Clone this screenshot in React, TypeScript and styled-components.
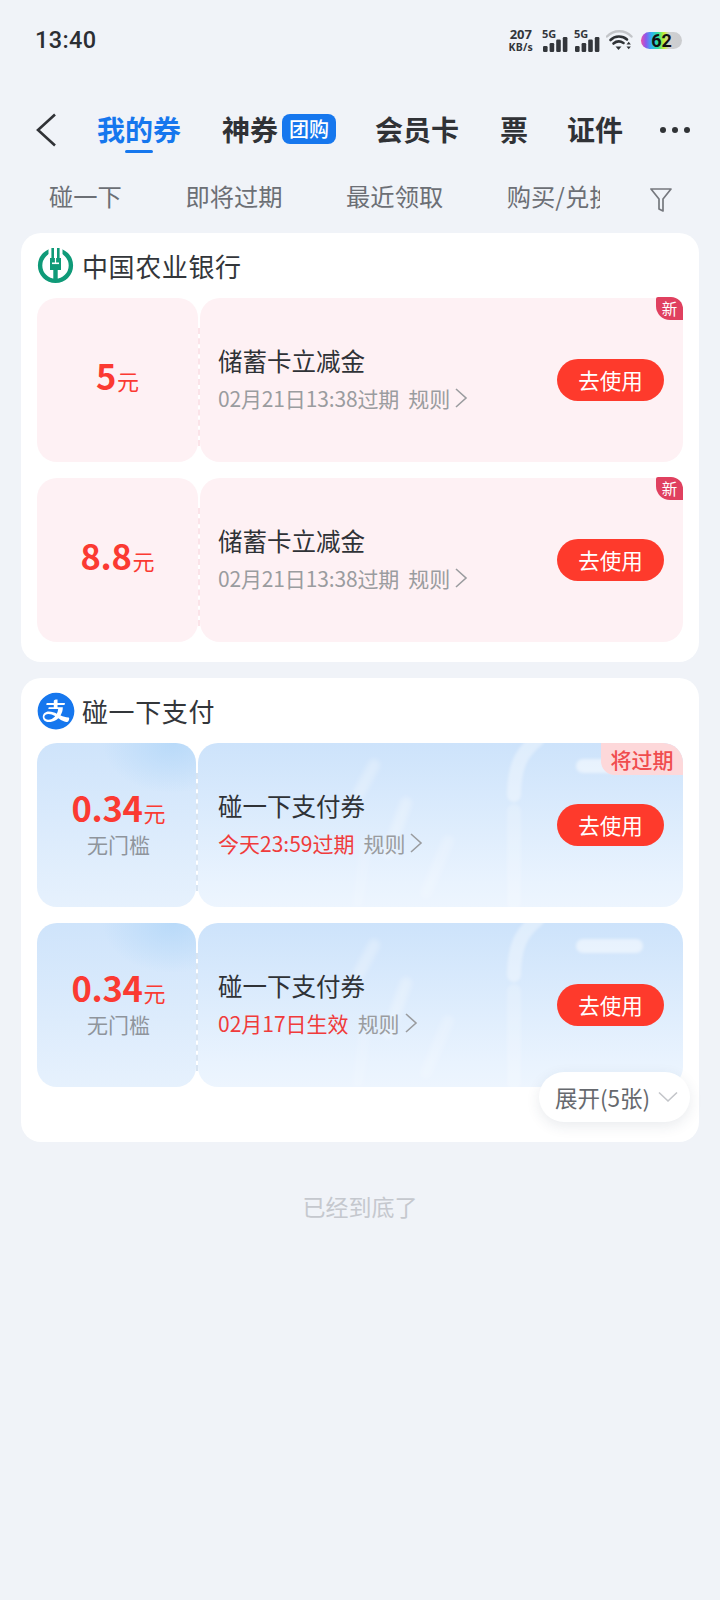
import React from "react";
import styled, { createGlobalStyle } from "styled-components";
import { AiFillAlipayCircle } from "react-icons/ai";

const cjk = `"Noto Sans CJK SC", "Noto Sans", sans-serif`;
const latin = `Roboto, "Noto Sans CJK SC", sans-serif`;

const Global = createGlobalStyle`
  html, body { margin: 0; padding: 0; background: #f0f3f8; }
  * { box-sizing: border-box; }
  body { font-family: ${cjk}; }
`;

const Page = styled.div`
  width: 720px;
  min-height: 1600px;
  background: #f0f3f8;
`;

/* ---------- status bar ---------- */
const StatusBar = styled.div`
  height: 80px;
  padding: 0 38px 0 35px;
  display: flex;
  align-items: center;
  justify-content: space-between;
`;
const Clock = styled.div`
  margin-top: 2px;
  font: 500 23.5px/1 ${latin};
  color: #2b2e33;
  letter-spacing: 0.4px;
`;
const StatusIcons = styled.div`
  display: flex;
  align-items: center;
`;
const Speed = styled.div`
  display: flex;
  flex-direction: column;
  align-items: center;
  font-family: "Noto Sans", sans-serif;
  font-weight: 700;
  color: #33363b;
  margin-right: 9px;
  span:first-child { font-size: 13px; line-height: 13px; }
  span:last-child { font-size: 10.5px; line-height: 12px; letter-spacing: 0.2px; }
`;
const SignalWrap = styled.div`
  position: relative;
  width: 27px;
  height: 24px;
  margin-right: 5px;
`;
const SignalLabel = styled.span`
  position: absolute;
  left: 0;
  top: 0;
  font: 700 11px/11px "Noto Sans", sans-serif;
  color: #33363b;
`;
const Battery = styled.div`
  width: 41px;
  height: 17px;
  border-radius: 9px;
  margin-left: 8px;
  background: linear-gradient(90deg, #ec4fa8 0%, #8a58ee 12%, #2fb6f2 26%, #2fe39a 42%, #c8ef2c 56%, #cfd0d2 68%, #cbcccf 100%);
  font: 700 18px/17px ${latin};
  color: #111;
  text-align: center;
`;

/* ---------- main tabs ---------- */
const Nav = styled.div`
  height: 100px;
  padding: 0 0 2px 36px;
  display: flex;
  align-items: center;
`;
const BackButton = styled.div`
  width: 20px;
  height: 34px;
  margin: 2px 41px 0 0;
  display: flex;
`;
const NavItem = styled.div<{ $active?: boolean; $gap?: number }>`
  position: relative;
  font: 700 28px/40px ${cjk};
  color: ${(p) => (p.$active ? "#1677ee" : "#303236")};
  margin-right: ${(p) => p.$gap ?? 41}px;
  display: flex;
  align-items: center;
  white-space: nowrap;
`;
const ActiveBar = styled.i`
  position: absolute;
  left: 28px;
  bottom: -4px;
  width: 28px;
  height: 3px;
  border-radius: 2px;
  background: #1677ee;
`;
const GroupBadge = styled.span`
  width: 54px;
  height: 30px;
  margin-left: 4px;
  border-radius: 8px;
  background: #1677ee;
  color: #fff;
  font: 500 20px/30px ${cjk};
  text-align: center;
`;
const Dots = styled.div`
  margin-top: 2px;
  display: flex;
  gap: 6px;
  i { width: 6px; height: 6px; border-radius: 50%; background: #303236; }
`;

/* ---------- filter row ---------- */
const FilterRow = styled.div`
  height: 35px;
  margin-bottom: 18px;
  padding-left: 49px;
  display: flex;
  align-items: center;
`;
const FilterScroll = styled.div`
  width: 551px;
  margin-top: -4px;
  overflow: hidden;
  display: flex;
  gap: 63.5px;
  flex-shrink: 0;
`;
const FilterItem = styled.span`
  font: 400 24.3px/35px ${cjk};
  color: #6c6f75;
  white-space: nowrap;
  flex-shrink: 0;
`;
const FilterIcon = styled.div`
  margin: 5px 0 0 50px;
  width: 22px;
  height: 26px;
`;

/* ---------- cards ---------- */
const Cards = styled.div`
  margin: 0 21px;
  display: flex;
  flex-direction: column;
  gap: 16px;
`;
const Card = styled.section<{ $bottom: number }>`
  position: relative;
  background: #fff;
  border-radius: 20px;
  padding: 0 16px ${(p) => p.$bottom}px 16px;
`;
const CardHead = styled.div`
  height: 65px;
  display: flex;
  align-items: center;
  gap: 8px;
`;
const CardTitle = styled.h2`
  margin: 0;
  font: 400 26px/36px ${cjk};
  letter-spacing: 0.6px;
  color: #33363a;
`;
const LogoBox = styled.div`
  width: 37px;
  height: 37px;
  display: flex;
  align-items: center;
  justify-content: center;
  svg { flex-shrink: 0; }
`;
const Tickets = styled.div`
  display: flex;
  flex-direction: column;
  gap: 16px;
`;
const Ticket = styled.div<{ $blue?: boolean }>`
  height: 164px;
  display: grid;
  grid-template-columns: ${(p) => (p.$blue ? "159px" : "161px")} 1fr;
  gap: 2px;
`;
const Stub = styled.div<{ $blue?: boolean }>`
  position: relative;
  border-radius: 20px;
  padding-left: ${(p) => (p.$blue ? "4px" : "0")};
  display: flex;
  flex-direction: column;
  align-items: center;
  justify-content: center;
  background: ${(p) =>
    p.$blue
      ? "radial-gradient(70px 50px at 85% 0%, #b9daf9 0%, rgba(185,218,249,0) 100%), linear-gradient(180deg, #cfe4fb 0%, #e6f1fd 100%)"
      : "#fef1f4"};
  &::after {
    content: "";
    position: absolute;
    right: -2px;
    top: 30px;
    bottom: 16px;
    border-right: 2px dashed ${(p) => (p.$blue ? "#d8e4f1" : "#fbe3e8")};
  }
`;
const Amount = styled.div<{ $withNote?: boolean }>`
  font: 700 34.5px/38px ${cjk};
  letter-spacing: -0.3px;
  color: #fb3a32;
  margin-top: ${(p) => (p.$withNote ? "-4px" : "-10px")};
  small { font: 400 22px/1 ${cjk}; letter-spacing: 0; margin-left: 1px; }
`;
const Threshold = styled.div`
  margin-top: 4px;
  font: 400 21px/28px ${cjk};
  color: #8f959c;
`;
const Body = styled.div<{ $blue?: boolean }>`
  position: relative;
  border-radius: 20px;
  padding: 0 19px 0 ${(p) => (p.$blue ? "20px" : "18px")};
  display: flex;
  align-items: center;
  justify-content: space-between;
  background: ${(p) =>
    p.$blue ? "linear-gradient(180deg, #cde3fb 0%, #e9f3fe 85%, #edf5fe 100%)" : "#fef1f4"};
`;
const Deco = styled.svg`
  position: absolute;
  left: 0;
  top: 0;
  width: 100%;
  height: 100%;
  border-radius: 20px;
  overflow: hidden;
`;
const Info = styled.div`
  position: relative;
  display: flex;
  flex-direction: column;
  gap: 2px;
  margin-top: -2px;
`;
const TicketTitle = styled.div`
  font: 400 24.5px/36px ${cjk};
  color: #2f3236;
`;
const Meta = styled.div`
  display: flex;
  align-items: center;
  font: 400 21px/34px ${cjk};
  color: #9a9c9f;
  white-space: nowrap;
`;
const Expiry = styled.span<{ $red?: boolean }>`
  color: ${(p) => (p.$red ? "#f03b3b" : "#9a9c9f")};
  letter-spacing: ${(p) => (p.$red ? "0" : "-0.15px")};
  margin-right: 9px;
`;
const Use = styled.div`
  position: relative;
  width: 107px;
  height: 42px;
  border-radius: 21px;
  background: #fe3a2c;
  color: #fff;
  font: 400 21.5px/42px ${cjk};
  text-align: center;
  flex-shrink: 0;
`;
const NewBadge = styled.span`
  position: absolute;
  right: 0;
  top: -1px;
  width: 27px;
  height: 23px;
  background: #e0405f;
  color: #fff;
  font: 400 15.5px/22px ${cjk};
  text-align: center;
  border-radius: 2px 12px 0 14px;
`;
const ExpireBadge = styled.span`
  position: absolute;
  right: 0;
  top: 0;
  width: 82px;
  height: 32px;
  background: #fdd8da;
  color: #f04c4e;
  font: 500 21px/32px ${cjk};
  text-align: center;
  border-radius: 0 20px 0 14px;
`;
const Expand = styled.div`
  position: absolute;
  left: 518px;
  top: 394px;
  width: 151px;
  height: 50px;
  padding: 0 12px 0 16px;
  border-radius: 25px;
  background: #fff;
  box-shadow: 0 4px 14px rgba(40, 60, 90, 0.1);
  display: flex;
  align-items: center;
  justify-content: space-between;
  font: 400 22.5px/48px ${cjk};
  color: #66696e;
  white-space: nowrap;
`;
const EndNote = styled.div`
  margin-top: 47px;
  text-align: center;
  font: 400 23px/34px ${cjk};
  color: #c5c8ce;
`;

/* ---------- drawings ---------- */
const Wifi = () => (
  <svg width="27" height="24" viewBox="0 0 27 24" fill="none">
    <path d="M1 8.5C7.5 1.5 19 1.5 25.5 8.5" stroke="#c3c5c9" strokeWidth="2.4" strokeLinecap="round" />
    <path d="M4.5 12C9 7.5 16.5 7.5 21 11.5" stroke="#2f3236" strokeWidth="2.6" strokeLinecap="round" />
    <path d="M7.5 15.5C10.5 13 14.5 13 17.5 15" stroke="#2f3236" strokeWidth="2.6" strokeLinecap="round" />
    <path d="M9.5 18.5h6l-3 3.5z" fill="#2f3236" />
    <path d="M20.5 16.5l2.2-2.8 2.2 2.8zM20.5 18.5l2.2 2.8 2.2-2.8z" fill="#2f3236" />
  </svg>
);

const Bars = () => (
  <svg width="25" height="15" viewBox="0 0 25 15" style={{ position: "absolute", left: 1, bottom: 0 }}>
    <rect x="0" y="9" width="4.6" height="6" rx="1.2" fill="#33363b" />
    <rect x="6.6" y="6" width="4.6" height="9" rx="1.2" fill="#33363b" />
    <rect x="13.2" y="2.5" width="4.6" height="12.5" rx="1.2" fill="#33363b" />
    <rect x="19.8" y="0" width="4.6" height="15" rx="1.2" fill="#33363b" />
  </svg>
);

const Signal = () => (
  <SignalWrap>
    <SignalLabel>5G</SignalLabel>
    <Bars />
  </SignalWrap>
);

const Chevron = () => (
  <svg width="14" height="22" viewBox="0 0 14 22" fill="none" style={{ marginLeft: 4 }}>
    <path d="M2 2l10 9-10 9" stroke="#9a9c9f" strokeWidth="1.6" />
  </svg>
);

const AbcLogo = () => (
  <svg width="37" height="37" viewBox="0 0 37 37">
    <circle cx="18.5" cy="18.5" r="15.4" fill="#fff" stroke="#0f9a78" strokeWidth="4.4" />
    <rect x="11.5" y="0" width="14" height="10" fill="#fff" />
    <rect x="14.4" y="1" width="2.6" height="11" fill="#0f9a78" />
    <rect x="20" y="1" width="2.6" height="11" fill="#0f9a78" />
    <rect x="13" y="11" width="11" height="12" fill="#0f9a78" />
    <rect x="17.9" y="11" width="1.2" height="5" fill="#fff" />
    <rect x="15" y="15.5" width="7" height="1.6" fill="#fff" />
    <rect x="16.3" y="22" width="4.4" height="12" fill="#0f9a78" />
  </svg>
);

const Streaks = () => (
  <Deco viewBox="0 0 485 164" preserveAspectRatio="none" fill="none" stroke="#fff" strokeLinecap="round">
    <g strokeOpacity="0.25" strokeWidth="12" style={{ filter: "blur(2.5px)" }}>
      <path d="M176 22L160 52" />
      <path d="M208 60L190 110" />
      <path d="M250 98L228 150" strokeOpacity="0.18" />
      <path d="M168 100L160 160" strokeOpacity="0.12" />
    </g>
    <g strokeOpacity="0.36" strokeWidth="14" style={{ filter: "blur(1.5px)" }}>
      <path d="M316 52C316 26 322 10 340 -4" />
      <path d="M316 68V160" strokeOpacity="0.2" />
      <path d="M385 23H438" strokeOpacity="0.5" />
    </g>
  </Deco>
);

type TicketData = {
  blue?: boolean;
  amount: string;
  threshold?: string;
  title: string;
  expiry: string;
  red?: boolean;
  badge?: "new" | "expire";
};

const CouponTicket = ({ blue, amount, threshold, title, expiry, red, badge }: TicketData) => (
  <Ticket $blue={blue}>
    <Stub $blue={blue}>
      <Amount $withNote={!!threshold}>
        {amount}
        <small>元</small>
      </Amount>
      {threshold && <Threshold>{threshold}</Threshold>}
    </Stub>
    <Body $blue={blue}>
      {blue && <Streaks />}
      <Info>
        <TicketTitle>{title}</TicketTitle>
        <Meta>
          <Expiry $red={red}>{expiry}</Expiry>
          规则
          <Chevron />
        </Meta>
      </Info>
      <Use>去使用</Use>
      {badge === "expire" && <ExpireBadge>将过期</ExpireBadge>}
      {badge === "new" && <NewBadge>新</NewBadge>}
    </Body>
  </Ticket>
);

export default function App() {
  return (
    <Page>
      <Global />
      <StatusBar>
        <Clock>13:40</Clock>
        <StatusIcons>
          <Speed>
            <span>207</span>
            <span>KB/s</span>
          </Speed>
          <Signal />
          <Signal />
          <Wifi />
          <Battery>62</Battery>
        </StatusIcons>
      </StatusBar>

      <Nav>
        <BackButton>
          <svg width="20" height="34" viewBox="0 0 20 34" fill="none">
            <path d="M19 1.5L2 17l17 15.5" stroke="#303236" strokeWidth="2.6" />
          </svg>
        </BackButton>
        <NavItem $active>
          我的券
          <ActiveBar />
        </NavItem>
        <NavItem $gap={39}>
          神券
          <GroupBadge>团购</GroupBadge>
        </NavItem>
        <NavItem>会员卡</NavItem>
        <NavItem $gap={39}>票</NavItem>
        <NavItem $gap={37}>证件</NavItem>
        <Dots>
          <i />
          <i />
          <i />
        </Dots>
      </Nav>

      <FilterRow>
        <FilterScroll>
          <FilterItem>碰一下</FilterItem>
          <FilterItem>即将过期</FilterItem>
          <FilterItem>最近领取</FilterItem>
          <FilterItem>购买/兑换</FilterItem>
        </FilterScroll>
        <FilterIcon>
          <svg width="22" height="26" viewBox="0 0 22 26" fill="none">
            <path d="M1 2h20l-8 10v12l-4-2V12z" stroke="#75787e" strokeWidth="1.7" strokeLinejoin="round" />
          </svg>
        </FilterIcon>
      </FilterRow>

      <Cards>
        <Card $bottom={20}>
          <CardHead>
            <LogoBox>
              <AbcLogo />
            </LogoBox>
            <CardTitle>中国农业银行</CardTitle>
          </CardHead>
          <Tickets>
            <CouponTicket amount="5" title="储蓄卡立减金" expiry="02月21日13:38过期" badge="new" />
            <CouponTicket amount="8.8" title="储蓄卡立减金" expiry="02月21日13:38过期" badge="new" />
          </Tickets>
        </Card>
        <Card $bottom={55}>
          <CardHead>
            <LogoBox>
              <AiFillAlipayCircle size={42} color="#1677ee" />
            </LogoBox>
            <CardTitle>碰一下支付</CardTitle>
          </CardHead>
          <Tickets>
            <CouponTicket blue amount="0.34" threshold="无门槛" title="碰一下支付券" expiry="今天23:59过期" red badge="expire" />
            <CouponTicket blue amount="0.34" threshold="无门槛" title="碰一下支付券" expiry="02月17日生效" red />
          </Tickets>
          <Expand>
            展开(5张)
            <svg width="20" height="12" viewBox="0 0 20 12" fill="none">
              <path d="M1 1.5l9 8.5 9-8.5" stroke="#c3c5c9" strokeWidth="1.6" />
            </svg>
          </Expand>
        </Card>
      </Cards>

      <EndNote>已经到底了</EndNote>
    </Page>
  );
}
